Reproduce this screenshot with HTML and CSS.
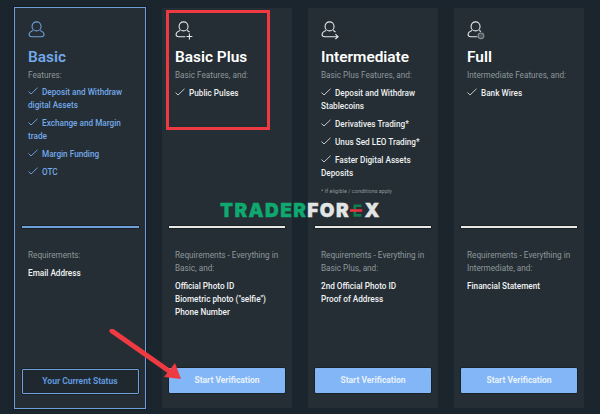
FILE: index.html
```html
<!DOCTYPE html>
<html lang="en">
<head>
<meta charset="utf-8">
<title>Verification levels</title>
<link rel="stylesheet" href="styles.css">
</head>
<body>
<main class="plans">
  <section class="card card-current">
    <div class="top">
      <svg class="avatar" viewBox="0 0 20 20"><circle cx="9.500" cy="6" r="5"/><path d="M5.500 10.500C3 11.500 1.200 13 1.200 15c0 2 1 2.500 3 2.500h10.600c2 0 3-.5 3-2.500 0-2-1.800-3.500-4.300-4.500"/></svg>
      <h2>Basic</h2>
      <p class="lead">Features:</p>
      <ul>
        <li><svg class="tick" viewBox="0 0 10 8"><path d="M.5 4.500 3 7 9.500 .8"/></svg>Deposit and Withdraw digital Assets</li>
        <li><svg class="tick" viewBox="0 0 10 8"><path d="M.5 4.500 3 7 9.500 .8"/></svg>Exchange and Margin trade</li>
        <li><svg class="tick" viewBox="0 0 10 8"><path d="M.5 4.500 3 7 9.500 .8"/></svg>Margin Funding</li>
        <li><svg class="tick" viewBox="0 0 10 8"><path d="M.5 4.500 3 7 9.500 .8"/></svg>OTC</li>
      </ul>
    </div>
    <hr>
    <div class="req">
      <p class="lead">Requirements:</p>
      <p class="need">Email Address</p>
    </div>
    <a class="btn btn-outline">Your Current Status</a>
  </section>

  <section class="card">
    <div class="top">
      <svg class="avatar" viewBox="0 0 20 20"><circle cx="9.500" cy="6" r="5"/><path d="M5.500 10.500C3 11.500 1.200 13 1.200 15c0 2 1 2.500 3 2.500h7.300M13.500 10.500c1 .4 2 1 2.600 1.800M16 14v6.500M12.800 17.300h6.500"/></svg>
      <h2>Basic Plus</h2>
      <p class="lead">Basic Features, and:</p>
      <ul>
        <li><svg class="tick" viewBox="0 0 10 8"><path d="M.5 4.500 3 7 9.500 .8"/></svg>Public Pulses</li>
      </ul>
    </div>
    <hr>
    <div class="req">
      <p class="lead">Requirements - Everything in Basic, and:</p>
      <p class="need">Official Photo ID<br>Biometric photo ("selfie")<br>Phone Number</p>
    </div>
    <a class="btn">Start Verification</a>
  </section>

  <section class="card">
    <div class="top">
      <svg class="avatar" viewBox="0 0 20 20"><circle cx="9.500" cy="6" r="5"/><path d="M5.500 10.500C3 11.500 1.200 13 1.200 15c0 2 1 2.500 3 2.500h5M13.500 10.500c1 .4 2 1 2.600 1.800M9 17.500h10M16 14.700l3 2.800-3 2.500"/></svg>
      <h2>Intermediate</h2>
      <p class="lead">Basic Plus Features, and:</p>
      <ul>
        <li><svg class="tick" viewBox="0 0 10 8"><path d="M.5 4.500 3 7 9.500 .8"/></svg>Deposit and Withdraw Stablecoins</li>
        <li><svg class="tick" viewBox="0 0 10 8"><path d="M.5 4.500 3 7 9.500 .8"/></svg>Derivatives Trading*</li>
        <li><svg class="tick" viewBox="0 0 10 8"><path d="M.5 4.500 3 7 9.500 .8"/></svg>Unus Sed LEO Trading*</li>
        <li><svg class="tick" viewBox="0 0 10 8"><path d="M.5 4.500 3 7 9.500 .8"/></svg>Faster Digital Assets Deposits</li>
      </ul>
      <p class="note">* If eligible / conditions apply</p>
    </div>
    <hr>
    <div class="req">
      <p class="lead">Requirements - Everything in Basic Plus, and:</p>
      <p class="need">2nd Official Photo ID<br>Proof of Address</p>
    </div>
    <a class="btn">Start Verification</a>
  </section>

  <section class="card">
    <div class="top">
      <svg class="avatar" viewBox="0 0 20 20"><circle cx="9.500" cy="6" r="5"/><path d="M5.500 10.500C3 11.500 1.200 13 1.200 15c0 2 1 2.500 3 2.500h7.300M13.500 10.500c.8.300 1.500.7 2 1.200"/><circle class="dim" cx="15.500" cy="16.500" r="3.200"/></svg>
      <h2>Full</h2>
      <p class="lead">Intermediate Features, and:</p>
      <ul>
        <li><svg class="tick" viewBox="0 0 10 8"><path d="M.5 4.500 3 7 9.500 .8"/></svg>Bank Wires</li>
      </ul>
    </div>
    <hr>
    <div class="req">
      <p class="lead">Requirements - Everything in Intermediate, and:</p>
      <p class="need">Financial Statement</p>
    </div>
    <a class="btn">Start Verification</a>
  </section>
</main>

<div class="highlight"></div>
<svg class="arrow" viewBox="0 0 80 60"><path d="M3 2 60 42"/><polygon points="72,50 55,48 66,34"/></svg>
<div class="mark"><span class="mark-green">TRADER</span><span>FOR</span><svg class="mark-e" viewBox="0 0 16 14"><path class="e-g" d="M4 0h9v3H7v8h6v3H4z"/><rect class="e-r" x="0" y="5.500" width="14" height="3"/></svg><span>X</span></div>
</body>
</html>
```
FILE: styles.css
```css
* { box-sizing: border-box; }
html, body { margin: 0; height: 100%; }
body {
  width: 600px;
  height: 414px;
  overflow: hidden;
  background: #1a252d;
  font-family: Roboto, "Liberation Sans", sans-serif;
  position: relative;
}
.plans {
  display: grid;
  grid-template-columns: repeat(4, 130px);
  column-gap: 16px;
  padding: 8px 0 6px 16px;
  height: 414px;
}
.card {
  display: flex;
  flex-direction: column;
  background: #242e34;
  padding: 0 7px 15px;
  height: 400px;
}
.card-current {
  margin: -1px 0 0 -2px;
  height: 402px;
  border: 1.500px solid #6f9fd8;
  box-shadow: 0 0 0 .5px #0f161b;
  padding: 0 6.500px 14.500px;
}
.top {
  height: 218px;
  padding: 13px 6px 0;
}
.card-current .top { height: 217.500px; padding: 12.500px 6px 0 6.500px; }
.avatar {
  display: block;
  width: 18px;
  height: 18px;
  overflow: visible;
  fill: none;
  stroke: #e6e8ea;
  stroke-width: 1.200;
}
.avatar .dim { stroke: #8a9296; fill: #4a5358; }
.card-current .avatar { stroke: #6f9fd8; }
h2 {
  margin: 8px 0 0;
  font-size: 15.400px;
  line-height: 20px;
  font-weight: 600;
  color: #fff;
}
.card-current h2, .card-current li { color: #74a9ea; }
.lead {
  margin: 2px 0 0;
  font-size: 8.200px;
  line-height: 12.500px;
  color: #8f979b;
}
ul { list-style: none; margin: 5px 0 0; padding: 0; }
li {
  font-size: 8.200px;
  line-height: 13px;
  font-weight: 500;
  color: #eef0f1;
  margin-bottom: 5px;
}
.tick {
  width: 10px;
  height: 8px;
  margin-right: 4px;
  fill: none;
  stroke: #d5d8da;
  stroke-width: .9;
}
.card-current .tick { stroke: #74a9ea; }
.note {
  margin: 7px 0 0;
  font-size: 5.500px;
  line-height: 8px;
  color: #8f979b;
}
hr {
  width: 100%;
  height: 2px;
  margin: 0;
  border: 0;
  background: #e8e8e4;
  box-shadow: 0 0 0 .5px #0f161b;
}
.card-current hr { background: #6f9fd8; }
.req { padding: 21px 6px 0; flex: 1; }
.card-current .req { padding-left: 6.500px; }
.req .lead { margin: 0; line-height: 13px; }
.need {
  margin: 5px 0 0;
  font-size: 8.200px;
  line-height: 13px;
  font-weight: 500;
  color: #f2f3f4;
}
.btn {
  display: block;
  height: 25px;
  line-height: 25px;
  border-radius: 1px;
  background: #82b6f6;
  color: #e8f1fb;
  font-size: 8.500px;
  font-weight: 700;
  text-align: center;
  box-shadow: 0 0 0 .5px #11181d;
}
.btn-outline {
  background: #1e282e;
  border: 1.500px solid #6f9fd8;
  line-height: 22px;
  color: #6097dc;
  box-shadow: 0 0 0 .5px #0f161b;
}
.highlight {
  position: absolute;
  left: 166px;
  top: 10px;
  width: 104px;
  height: 119.500px;
  border: 3px solid #ee3a40;
}
.arrow {
  position: absolute;
  left: 109px;
  top: 329px;
  width: 80px;
  height: 60px;
  fill: #ee3a40;
  stroke: #ee3a40;
  stroke-width: 5;
  stroke-linecap: round;
}
.arrow polygon { stroke: none; }
.mark {
  position: absolute;
  left: 220px;
  top: 200.500px;
  display: flex;
  align-items: center;
  height: 20px;
  font-family: Inter, "Liberation Sans", sans-serif;
  font-weight: 900;
  font-size: 19px;
  letter-spacing: 1.400px;
  color: #e3e4e4;
  -webkit-text-stroke: .4px currentColor;
}
.mark-green { color: #0fa86f; }
.mark-e { width: 14px; height: 13px; margin: 0 .5px 0 0; }
.e-g { fill: #0f7f4e; }
.e-r { fill: #e8323c; }
```
